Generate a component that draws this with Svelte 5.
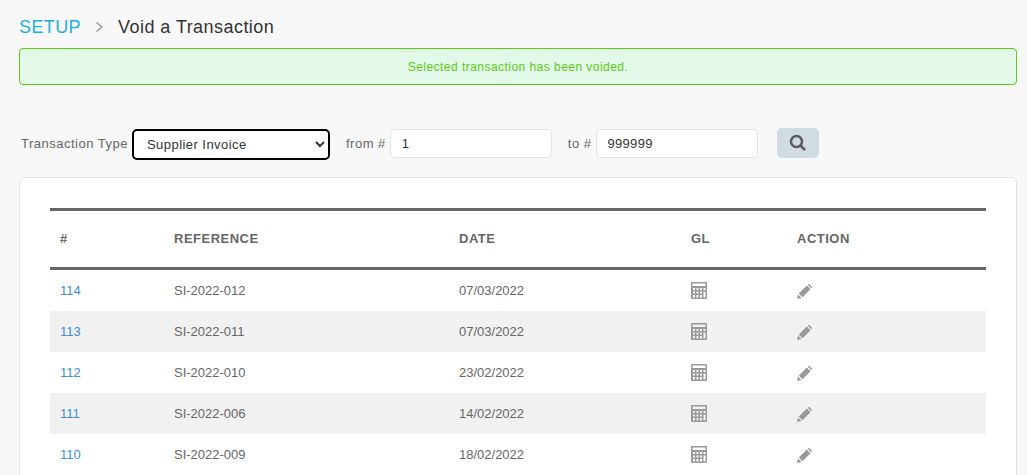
<script>
	const rows = [
		{ id: 114, reference: 'SI-2022-012', date: '07/03/2022' },
		{ id: 113, reference: 'SI-2022-011', date: '07/03/2022' },
		{ id: 112, reference: 'SI-2022-010', date: '23/02/2022' },
		{ id: 111, reference: 'SI-2022-006', date: '14/02/2022' },
		{ id: 110, reference: 'SI-2022-009', date: '18/02/2022' }
	];
</script>

<div class="page">
	<div class="crumbs">
		<span class="setup">SETUP</span>
		<svg class="chevron" width="9" height="12" viewBox="0 0 9 12"><path d="M1.5 1.5 7 6l-5.500 4.500" /></svg>
		<span class="title">Void a Transaction</span>
	</div>

	<div class="alert">Selected transaction has been voided.</div>

	<form class="filters">
		<label for="type">Transaction Type</label>
		<select id="type">
			<option>Supplier Invoice</option>
		</select>
		<label class="from" for="from">from #</label>
		<input id="from" value="1" />
		<label class="to" for="to">to #</label>
		<input id="to" value="999999" />
		<button type="button" class="search" aria-label="Search">
			<svg width="18" height="18" viewBox="0 0 18 18">
				<circle cx="7.500" cy="7.500" r="5.500" />
				<path d="M11.500 11.500 16 16" />
			</svg>
		</button>
	</form>

	<div class="card">
		<table>
			<thead>
				<tr>
					<th class="c1">#</th>
					<th class="c2">Reference</th>
					<th class="c3">Date</th>
					<th class="c4">GL</th>
					<th>Action</th>
				</tr>
			</thead>
			<tbody>
				{#each rows as row}
					<tr>
						<td class="num">{row.id}</td>
						<td>{row.reference}</td>
						<td>{row.date}</td>
						<td>
							<svg class="icon" width="16" height="17" viewBox="0 0 16 17">
								<path
									fill-rule="evenodd"
									d="M1 0h14a1 1 0 0 1 1 1v15a1 1 0 0 1-1 1H1a1 1 0 0 1-1-1V1a1 1 0 0 1 1-1ZM1.500 1.500V4h13V1.500ZM2 6v2h2V6ZM5.500 6v2h2V6ZM9 6v2h2V6ZM12.500 6v2h2V6ZM2 9.500v2h2v-2ZM5.500 9.500v2h2v-2ZM9 9.500v2h2v-2ZM12.500 9.500V15.500h2V9.500ZM2 13v2.500h2V13ZM5.500 13v2.500h2V13ZM9 13v2.500h2V13Z"
								/>
							</svg>
						</td>
						<td>
							<svg class="icon pencil" width="15" height="15" viewBox="0 0 15 15">
								<path d="M0 15 1 10.500 4.500 14Z" />
								<path d="M1.800 9.500 9.800 1.500 13.500 5.200 5.500 13.200Z" />
								<path d="M10.800 0.600a1.400 1.400 0 0 1 2 0l1.600 1.600a1.400 1.400 0 0 1 0 2l-0.100 0.100-3.600-3.600Z" />
							</svg>
						</td>
					</tr>
				{/each}
			</tbody>
		</table>
	</div>
</div>

<style>
	:global(body) {
		margin: 0;
		background-color: #f8f8f8;
		overflow: hidden;
	}
	* {
		font-family: 'Liberation Sans', Arial, sans-serif;
		box-sizing: border-box;
	}
	.page {
		height: 475px;
		overflow: hidden;
		padding: 16px 10px 0 19px;
	}
	.crumbs {
		display: flex;
		align-items: center;
		height: 22px;
		font-size: 18px;
		letter-spacing: 0.4px;
	}
	.setup {
		color: #1ab0e0;
	}
	.chevron {
		margin: 0 14px 0 14px;
	}
	.chevron path {
		fill: none;
		stroke: #999;
		stroke-width: 1.500;
	}
	.title {
		color: #333;
		letter-spacing: 0.45px;
	}
	.alert {
		height: 37px;
		margin-top: 10px;
		border: 1px solid #5ccb14;
		border-radius: 4px;
		background-color: #e2f9e9;
		color: #5ccb14;
		font-size: 12px;
		letter-spacing: 0.46px;
		line-height: 37px;
		text-align: center;
	}
	.filters {
		display: flex;
		align-items: flex-start;
		height: 32px;
		margin-top: 43px;
		padding-left: 2px;
	}
	label {
		color: #666;
		font-size: 13px;
		letter-spacing: 0.5px;
		line-height: 31px;
	}
	select {
		width: 198px;
		height: 31px;
		margin: 1px 0 0 4px;
		padding-left: 9px;
		border: 2px solid #000;
		border-radius: 5px;
		background-color: #fff;
		color: #333;
		font-size: 13px;
		letter-spacing: 0.45px;
	}
	.from {
		margin-left: 16px;
	}
	.to {
		margin-left: 16px;
	}
	input {
		width: 162px;
		height: 29px;
		margin: 1px 0 0 4px;
		padding: 0 11px;
		border: 1px solid #e3e3e3;
		border-radius: 4px;
		background-color: #fff;
		color: #333;
		font-size: 13px;
		letter-spacing: 0.3px;
	}
	.search {
		display: flex;
		align-items: center;
		justify-content: center;
		width: 42px;
		height: 30px;
		margin-left: 19px;
		padding: 0;
		border: none;
		border-radius: 5px;
		background-color: #cfdde1;
	}
	.search circle,
	.search path {
		fill: none;
		stroke: #5a5a5a;
		stroke-width: 2.500;
	}
	.card {
		margin-top: 17px;
		padding: 30px;
		border: 1px solid #e3e3e3;
		border-radius: 6px;
		background-color: #fff;
	}
	table {
		width: 936px;
		border-collapse: separate;
		border-spacing: 0;
		table-layout: fixed;
	}
	th {
		height: 62px;
		padding: 0 10px 2px;
		border-top: 3px solid #666;
		border-bottom: 3px solid #666;
		color: #666;
		font-size: 13px;
		font-weight: bold;
		letter-spacing: 0.5px;
		text-align: left;
		text-transform: uppercase;
	}
	.c1 {
		width: 114px;
	}
	.c2 {
		width: 285px;
	}
	.c3 {
		width: 232px;
	}
	.c4 {
		width: 106px;
	}
	td {
		height: 41px;
		padding: 0 10px;
		color: #666;
		font-size: 13px;
	}
	tbody tr:nth-child(even) td {
		background-color: #f1f1f1;
	}
	.num {
		color: #3a8fd6;
	}
	.icon {
		display: block;
		fill: #999;
	}
	.pencil {
		margin-top: 1px;
	}
</style>
